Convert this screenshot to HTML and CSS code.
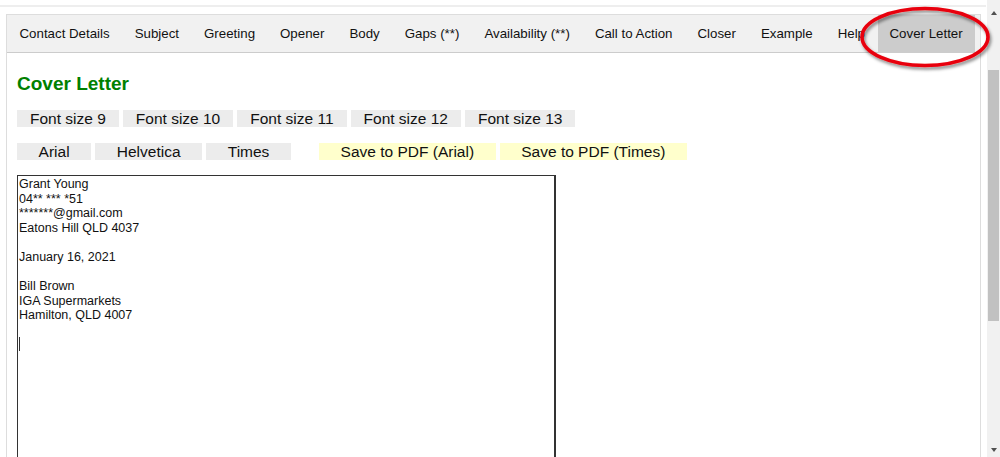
FILE: index.html
```html
<!DOCTYPE html>
<html lang="en">
<head>
<meta charset="utf-8">
<title>Cover Letter</title>
<link rel="stylesheet" href="styles.css">
</head>
<body>
<div class="window">
  <div class="main">
    <div class="topline"></div>
    <div class="panel">
      <nav class="tabs">
        <span class="tab">Contact Details</span>
        <span class="tab">Subject</span>
        <span class="tab">Greeting</span>
        <span class="tab">Opener</span>
        <span class="tab">Body</span>
        <span class="tab">Gaps (**)</span>
        <span class="tab">Availability (**)</span>
        <span class="tab">Call to Action</span>
        <span class="tab">Closer</span>
        <span class="tab">Example</span>
        <span class="tab">Help</span>
        <span class="tab active">Cover Letter</span>
      </nav>
      <div class="content">
        <h2 class="title">Cover Letter</h2>
        <div class="btnrow sizes">
          <span class="btn">Font size 9</span>
          <span class="btn">Font size 10</span>
          <span class="btn">Font size 11</span>
          <span class="btn">Font size 12</span>
          <span class="btn">Font size 13</span>
        </div>
        <div class="btnrow fonts">
          <span class="btn">Arial</span>
          <span class="btn">Helvetica</span>
          <span class="btn">Times</span>
          <span class="btn pdf first-pdf">Save to PDF (Arial)</span>
          <span class="btn pdf">Save to PDF (Times)</span>
        </div>
        <div class="editor">
          <textarea class="letter" spellcheck="false">Grant Young
04** *** *51
*******@gmail.com
Eatons Hill QLD 4037

January 16, 2021

Bill Brown
IGA Supermarkets
Hamilton, QLD 4007

</textarea>
          <span class="caret"></span>
        </div>
      </div>
    </div>
  </div>
  <div class="scrollbar">
    <span class="arrow up"></span>
    <div class="track"><div class="thumb"></div></div>
    <span class="arrow down"></span>
  </div>
</div>
<svg class="annotation" width="150" height="80" viewBox="0 0 150 80">
  <defs>
    <filter id="sh" x="-20%" y="-20%" width="140%" height="150%">
      <feDropShadow dx="1.5" dy="2.5" stdDeviation="1.6" flood-color="#000" flood-opacity="0.45"/>
    </filter>
  </defs>
  <ellipse cx="70" cy="37" rx="63" ry="28.5" fill="none" stroke="#e8000b" stroke-width="3.6" filter="url(#sh)"/>
</svg>
</body>
</html>
```
FILE: styles.css
```css
html, body {
  margin: 0;
  padding: 0;
  background: #ffffff;
}

body {
  font-family: "Liberation Sans", Arial, sans-serif;
  color: #111;
  position: relative;
  overflow: hidden;
}

.window {
  display: flex;
  height: 457px;
  overflow: hidden;
}

.main {
  flex: 0 0 987px;
  width: 987px;
}

.topline {
  margin-top: 5px;
  height: 2px;
  width: 986px;
  background: #eeeeee;
}

.panel {
  margin: 7px 6px 0 6px;
  border: 1px solid #dddddd;
  height: 600px;
}

.tabs {
  display: flex;
  height: 37px;
  background: #f1f1f1;
  border-bottom: 1px solid #cccccc;
}

.tab {
  padding: 0 12.5px;
  line-height: 37px;
  font-size: 13.3px;
  color: #111;
  white-space: nowrap;
}

.tab.active {
  background: #cccccc;
  padding: 0 12px;
}

.content {
  padding: 20px 10px 0 10px;
}

.title {
  margin: 0;
  font-size: 19px;
  line-height: 22px;
  font-weight: bold;
  color: #008000;
}

.btnrow {
  display: flex;
  gap: 4px;
  margin-top: 15px;
}

.btnrow.fonts {
  margin-top: 16px;
}

.btn {
  display: block;
  height: 17px;
  line-height: 17px;
  font-size: 15.5px;
  background: #ececec;
  color: #111;
  white-space: nowrap;
}

.sizes .btn {
  padding: 0 13px;
}

.fonts .btn {
  padding: 0 21.6px;
}

.btn.pdf {
  background: #ffffcc;
}

.btn.first-pdf {
  margin-left: 24px;
}

.editor {
  position: relative;
  margin-top: 15px;
  width: 539px;
}

.letter {
  display: block;
  margin: 0;
  width: 539px;
  height: 400px;
  box-sizing: border-box;
  border: 1px solid #333333;
  border-right-width: 2px;
  padding: 1px 1px;
  font-family: "Liberation Sans", Arial, sans-serif;
  font-size: 12.5px;
  line-height: 14.6px;
  color: #111;
  resize: none;
  outline: none;
  overflow: hidden;
  background: #fff;
}

.caret {
  position: absolute;
  left: 2px;
  top: 162px;
  width: 1px;
  height: 14px;
  background: #333;
}

.scrollbar {
  flex: 0 0 13px;
  width: 13px;
  background: #f1f1f1;
  display: flex;
  flex-direction: column;
  align-items: center;
}

.arrow {
  display: block;
  width: 0;
  height: 0;
  border-left: 3.5px solid transparent;
  border-right: 3.5px solid transparent;
  flex: none;
}

.arrow.up {
  margin-top: 11px;
  border-bottom: 4px solid #505050;
}

.arrow.down {
  margin-bottom: 5px;
  border-top: 4px solid #505050;
}

.track {
  flex: 1;
  width: 100%;
  display: flex;
  justify-content: center;
}

.thumb {
  margin-top: 55px;
  width: 11px;
  height: 251px;
  background: #c1c1c1;
}

.annotation {
  position: absolute;
  left: 855px;
  top: 0;
  pointer-events: none;
}
```
